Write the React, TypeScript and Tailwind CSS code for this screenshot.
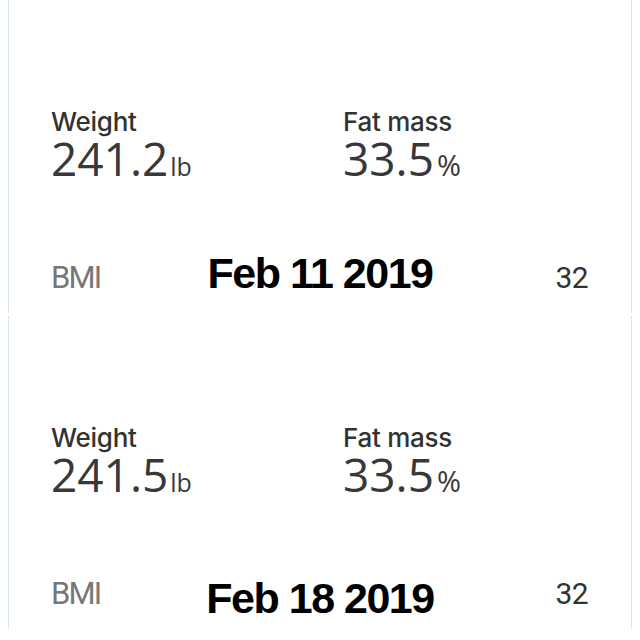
const entries = [
  { weight: "241.2", fat: "33.5", bmi: "32", date: "Feb 11 2019", dateShift: "translate-y-0" },
  { weight: "241.5", fat: "33.5", bmi: "32", date: "Feb 18 2019", dateShift: "translate-y-[9px]" },
];

function Panel({ weight, fat, bmi, date, dateShift }: (typeof entries)[number]) {
  return (
    <div className="mx-2 h-[313px] border-x border-[#d6e7ee] px-[42px] pt-[107px] text-[#333]">
      <div className="grid grid-cols-[292px_1fr]">
        <div>
          <div className="font-['Inter',sans-serif] text-[26px] leading-[30px] font-medium tracking-[-0.01em]">Weight</div>
          <div className="text-[46px] leading-[42px] text-[#383838]">
            {weight}
            <span className="ml-[2px] text-[25px]">lb</span>
          </div>
        </div>
        <div>
          <div className="font-['Inter',sans-serif] text-[26px] leading-[30px] font-medium tracking-[-0.01em]">Fat mass</div>
          <div className="text-[46px] leading-[42px] text-[#383838]">
            {fat}
            <span className="ml-[3px] text-[29px]">%</span>
          </div>
        </div>
      </div>
      <div className="mt-[65px] grid grid-cols-[1fr_auto_1fr] items-baseline">
        <div className="font-['Roboto',sans-serif] text-[31px] leading-[42px] tracking-[-0.06em] text-[#777]">BMI</div>
        <div className={`font-['Liberation_Sans',Arial,sans-serif] text-[43px] leading-[42px] font-bold tracking-[-0.035em] text-black ${dateShift}`}>
          {date}
        </div>
        <div className="justify-self-end pr-[1px] font-['Roboto',sans-serif] text-[30px] leading-[42px] tracking-[-0.02em] text-[#333]">{bmi}</div>
      </div>
    </div>
  );
}

export default function App() {
  return (
    <div className="flex h-[640px] w-[640px] flex-col gap-[3px] bg-white font-['Open_Sans',sans-serif]">
      {entries.map((e) => (
        <Panel key={e.date} {...e} />
      ))}
    </div>
  );
}
